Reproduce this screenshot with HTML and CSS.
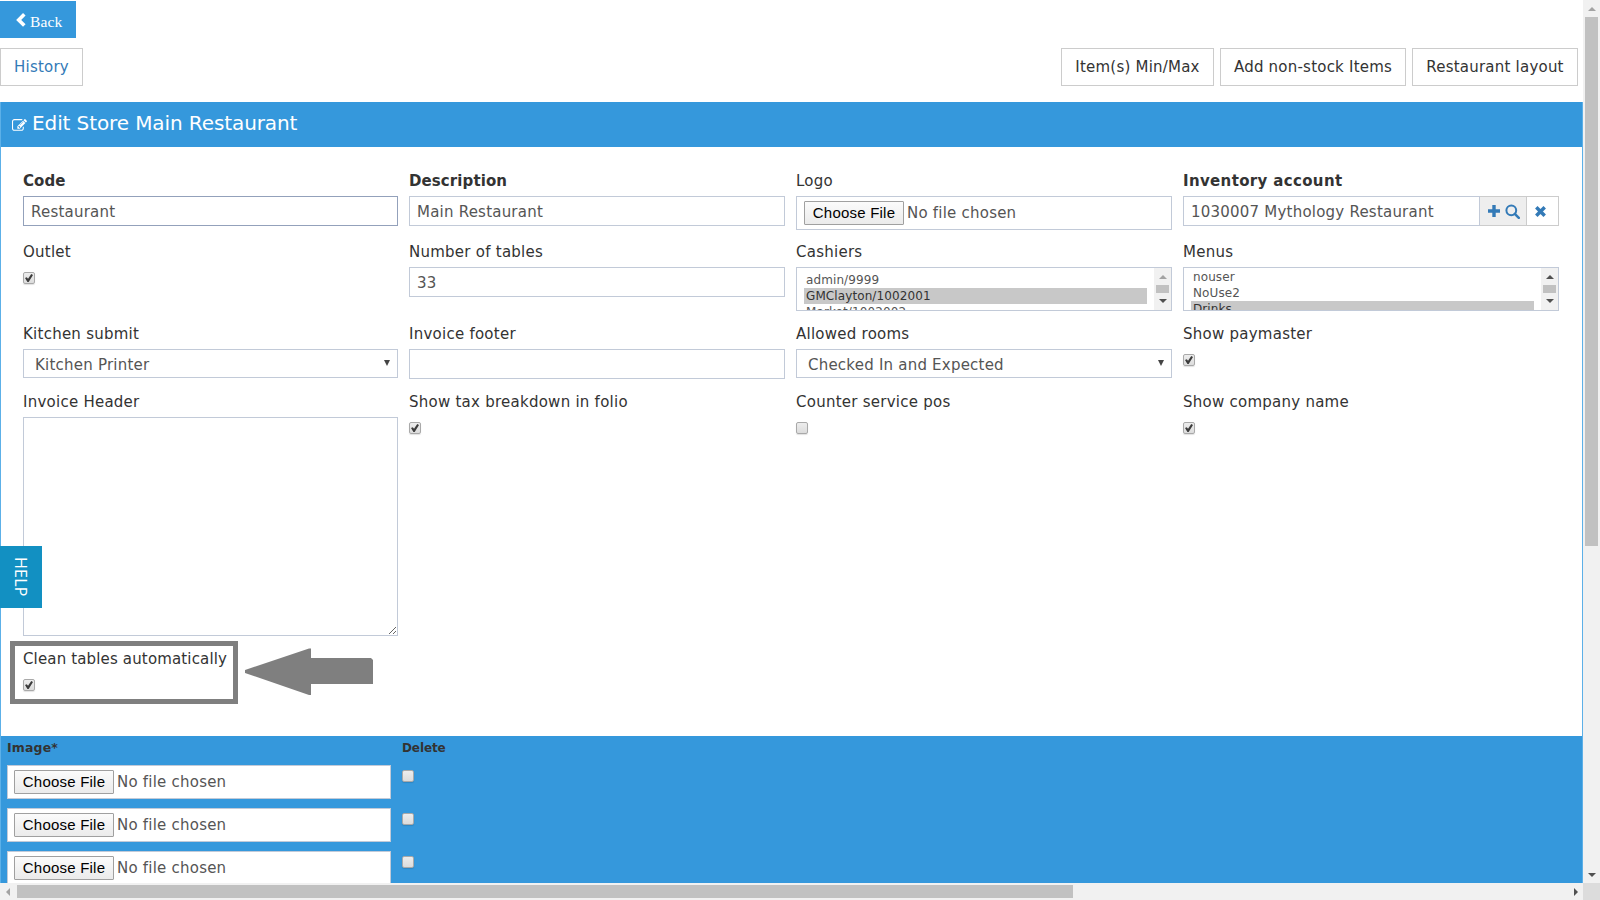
FILE: index.html
```html
<!DOCTYPE html>
<html lang="en">
<head>
  <meta charset="UTF-8">
  <title>Edit Store Main Restaurant</title>
  <link rel="stylesheet" href="styles.css">
</head>
<body>
<div class="window">
  <div class="page">
    <a class="back" href="#">
      <svg width="10" height="14" viewBox="0 0 10 14"><path d="M8.300 1.300 2.700 6.900l5.600 5.600" fill="none" stroke="#fff" stroke-width="3.600"/></svg>
      <span>Back</span>
    </a>
    <div class="toolbar">
      <a class="btn link" href="#">History</a>
      <div class="actions">
        <a class="btn b1" href="#">Item(s) Min/Max</a>
        <a class="btn b2" href="#">Add non-stock Items</a>
        <a class="btn b3" href="#">Restaurant layout</a>
      </div>
    </div>

    <div class="panel">
      <div class="panel-title">
        <svg width="15" height="15" viewBox="0 0 1792 1792"><path fill="#fff" d="M888 1184l116-116-152-152-116 116v56h96v96h56zm440-720q-16-16-33 1l-350 350q-17 17-1 33t33-1l350-350q17-17 1-33zm80 594v190q0 119-84.500 203.500t-203.500 84.500h-832q-119 0-203.500-84.500t-84.500-203.500v-832q0-119 84.500-203.500t203.500-84.500h832q63 0 117 25 15 7 18 23 3 17-9 29l-49 49q-14 14-32 8-23-6-45-6h-832q-66 0-113 47t-47 113v832q0 66 47 113t113 47h832q66 0 113-47t47-113v-126q0-13 9-22l64-64q15-15 35-7t20 29zm-96-738l288 288-672 672h-288v-288zm444 132l-92 92-288-288 92-92q28-28 68-28t68 28l152 152q28 28 28 68t-28 68z"/></svg>
        <h1>Edit Store Main Restaurant</h1>
      </div>

      <form class="form">
        <div class="field">
          <label class="required">Code</label>
          <input class="control focused" type="text" value="Restaurant">
        </div>
        <div class="field">
          <label class="required">Description</label>
          <input class="control" type="text" value="Main Restaurant">
        </div>
        <div class="field">
          <label>Logo</label>
          <div class="file"><span class="choose">Choose File</span><span>No file chosen</span></div>
        </div>
        <div class="field">
          <label class="required wide">Inventory account</label>
          <div class="group">
            <input class="control" type="text" value="1030007 Mythology Restaurant">
            <span class="addon find">
              <svg width="12" height="12" viewBox="0 0 12 12"><path d="M6 0v12M0 6h12" stroke="#337ab7" stroke-width="3.400"/></svg>
              <svg width="15" height="15" viewBox="0 0 15 15"><circle cx="6.300" cy="6.300" r="4.900" fill="none" stroke="#337ab7" stroke-width="2"/><path d="M9.800 9.800l4 4" stroke="#337ab7" stroke-width="2.500" stroke-linecap="round"/></svg>
            </span>
            <span class="addon clear">
              <svg width="11" height="11" viewBox="0 0 11 11"><path d="M1.300 1.300l8.400 8.400M9.700 1.300l-8.400 8.400" stroke="#337ab7" stroke-width="3.500"/></svg>
            </span>
          </div>
        </div>

        <div class="field">
          <label>Outlet</label>
          <input class="check" type="checkbox" checked>
        </div>
        <div class="field">
          <label>Number of tables</label>
          <input class="control" type="text" value="33">
        </div>
        <div class="field">
          <label>Cashiers</label>
          <div class="list">
            <ul class="options">
              <li>admin/9999</li>
              <li class="selected">GMClayton/1002001</li>
              <li>Market/1002002</li>
            </ul>
            <div class="list-bar"><i class="up off"></i><i class="grip"></i><i class="down"></i></div>
          </div>
        </div>
        <div class="field">
          <label>Menus</label>
          <div class="list">
            <ul class="options scrolled">
              <li>nouser</li>
              <li>NoUse2</li>
              <li class="selected">Drinks</li>
            </ul>
            <div class="list-bar"><i class="up"></i><i class="grip"></i><i class="down"></i></div>
          </div>
        </div>

        <div class="field">
          <label>Kitchen submit</label>
          <div class="select"><span>Kitchen Printer</span><i></i></div>
        </div>
        <div class="field">
          <label>Invoice footer</label>
          <input class="control" type="text">
        </div>
        <div class="field">
          <label>Allowed rooms</label>
          <div class="select"><span>Checked In and Expected</span><i></i></div>
        </div>
        <div class="field">
          <label>Show paymaster</label>
          <input class="check" type="checkbox" checked>
        </div>

        <div class="field">
          <label>Invoice Header</label>
          <textarea class="control"></textarea>
        </div>
        <div class="field">
          <label>Show tax breakdown in folio</label>
          <input class="check" type="checkbox" checked>
        </div>
        <div class="field">
          <label>Counter service pos</label>
          <input class="check" type="checkbox">
        </div>
        <div class="field">
          <label>Show company name</label>
          <input class="check" type="checkbox" checked>
        </div>

        <div class="field">
          <label class="tight">Clean tables automatically</label>
          <input class="check" type="checkbox" checked>
        </div>
      </form>

      <div class="images">
        <div class="head">Image*</div>
        <div class="head delete">Delete</div>
        <div class="file"><span class="choose">Choose File</span><span>No file chosen</span></div>
        <input class="check" type="checkbox">
        <div class="file"><span class="choose">Choose File</span><span>No file chosen</span></div>
        <input class="check" type="checkbox">
        <div class="file"><span class="choose">Choose File</span><span>No file chosen</span></div>
        <input class="check" type="checkbox">
      </div>
    </div>
  </div>

  <div class="vbar"><i class="up off"></i><i class="thumb"></i><i class="down"></i></div>
  <div class="hbar"><i class="left"></i><i class="thumb"></i><i class="right"></i></div>
  <div class="corner"></div>
</div>

<!-- things that float over the form -->
<a class="help" href="#">HELP</a>
<div class="highlight"></div>
<svg class="arrow" width="128" height="48" viewBox="0 0 128 48"><path fill="#7f7f7f" d="M0 22 64 0.500h2V10h60l2 2v24H66v11h-2L0 25z"/></svg>
</body>
</html>
```

FILE: styles.css
```css
* {
  box-sizing: border-box;
}
body {
  margin: 0;
  overflow: hidden;
  background: #fff;
  color: #333;
  font-family: "DejaVu Sans", Verdana, sans-serif;
  font-size: 15px;
  letter-spacing: 0.22px;
}
a {
  text-decoration: none;
}
.window {
  display: grid;
  grid-template-columns: 1583px 17px;
  grid-template-rows: 883px 17px;
  width: 1600px;
  height: 900px;
}
.page {
  overflow: hidden;
  padding-top: 1px;
}
.back {
  display: flex;
  align-items: center;
  gap: 4px;
  width: 76px;
  height: 37px;
  padding-left: 16px;
  background: #3598dc;
  color: #fff;
  font-family: "Liberation Serif", serif;
  font-size: 15.5px;
  letter-spacing: 0.1px;
}
.back span {
  padding-top: 5px;
}
.toolbar {
  display: flex;
  justify-content: space-between;
  padding: 10px 5px 0 0;
}
.actions {
  display: flex;
  gap: 6px;
}
.btn {
  height: 38px;
  border: 1px solid #ccc;
  color: #333;
  line-height: 36px;
  text-align: center;
  white-space: nowrap;
}
.link {
  width: 83px;
  color: #337ab7;
}
.b1 {
  width: 153px;
}
.b2 {
  width: 186px;
}
.b3 {
  width: 166px;
}

/* panel */
.panel {
  margin-top: 16px;
  border: 1px solid #5cb0e8;
  border-top: none;
}
.panel-title {
  display: flex;
  height: 45px;
  padding: 0 11px;
  background: #3598dc;
  color: #fff;
}
.panel-title svg {
  margin: 16px 5px 0 0;
}
.panel-title h1 {
  margin: 0;
  font-size: 20px;
  font-weight: normal;
  letter-spacing: -0.1px;
  line-height: 42px;
}
.form {
  display: grid;
  grid-template-columns: 375px 376px 376px 376px;
  grid-template-rows: 71px 82px 68px 257px 87px;
  column-gap: 11px;
  padding: 24px 0 0 22px;
}
.field label {
  display: block;
  height: 25px;
  line-height: 20px;
  letter-spacing: 0.25px;
}
.field .required {
  font-weight: bold;
  letter-spacing: 0.1px;
}
.field .wide {
  letter-spacing: 0.35px;
}
.field .tight {
  letter-spacing: 0.15px;
}
.control {
  display: block;
  width: 100%;
  height: 30px;
  margin: 0;
  padding: 2px 7px 0;
  border: 1px solid #c2cad8;
  outline: none;
  background: #fff;
  color: #555;
  font: inherit;
  letter-spacing: 0.22px;
}
.focused {
  border-color: #93a1bb;
}
textarea.control {
  height: 219px;
}
.file {
  display: flex;
  align-items: center;
  gap: 3px;
  height: 34px;
  padding-left: 7px;
  border: 1px solid #c2cad8;
  background: #fff;
  color: #555;
}
.choose {
  width: 100px;
  height: 24px;
  border: 1px solid #a0a0a0;
  border-radius: 1px;
  background: linear-gradient(#fbfbfb, #ebebeb);
  color: #000;
  font-family: "Liberation Sans", Arial, sans-serif;
  line-height: 22px;
  text-align: center;
}
.group {
  display: flex;
}
.group .control {
  width: 297px;
}
.addon {
  display: flex;
  align-items: center;
  height: 30px;
  border: 1px solid #ccc;
  border-left: none;
}
.find {
  gap: 5px;
  width: 47px;
  padding-left: 8px;
  background: #eee;
}
.clear {
  width: 32px;
  padding-left: 8px;
}
.select {
  display: flex;
  align-items: center;
  justify-content: space-between;
  height: 29px;
  padding: 2px 7px 0 11px;
  border: 1px solid #c2cad8;
  color: #555;
}
.select i {
  margin-bottom: 4px;
  border: 3px solid transparent;
  border-top: 6px solid #444;
  border-bottom: none;
}

/* checkboxes */
.check {
  appearance: none;
  display: block;
  width: 12px;
  height: 12px;
  margin: 5px 0 0;
  border: 1px solid #a9a9a9;
  border-radius: 2px;
  background: linear-gradient(#ededed, #dcdcdc);
  box-shadow: 0 1px 1px rgba(0, 0, 0, 0.12);
}
.check:checked::before {
  content: "";
  display: block;
  width: 8px;
  height: 8px;
  margin: 1px;
  background: #3c3c3c;
  clip-path: polygon(0 50%, 22% 40%, 38% 60%, 78% 0, 100% 14%, 46% 100%, 30% 100%);
}

/* multi selects */
.list {
  display: flex;
  height: 44px;
  border: 1px solid #c2cad8;
  overflow: hidden;
}
.options {
  flex: 1;
  margin: 0;
  padding: 4px 7px 0;
  list-style: none;
  color: #555;
  font-size: 12px;
  letter-spacing: 0.1px;
}
.scrolled {
  padding-top: 1px;
}
.options li {
  height: 16px;
  padding-left: 2px;
  line-height: 16px;
}
.options .selected {
  background: #c8c8c8;
  color: #333;
}
.list-bar {
  display: flex;
  flex-direction: column;
  align-items: center;
  width: 17px;
  padding-top: 7px;
  background: #f1f1f1;
}
.list-bar .grip {
  width: 13px;
  height: 8px;
  margin: 6px 0;
  background: #c1c1c1;
}
.up {
  border: 4px solid transparent;
  border-top: none;
  border-bottom-color: #505050;
}
.down {
  border: 4px solid transparent;
  border-bottom: none;
  border-top-color: #505050;
}
.up.off {
  border-bottom-color: #a3a3a3;
}

/* images table */
.images {
  display: grid;
  grid-template-columns: 384px 12px;
  grid-template-rows: 29px 43px 43px 43px;
  column-gap: 11px;
  align-items: start;
  padding-left: 6px;
  background: #3598dc;
}
.images .head {
  font-size: 12.5px;
  font-weight: bold;
  line-height: 24px;
  letter-spacing: 0.15px;
}
.images .delete {
  font-size: 12px;
  letter-spacing: -0.1px;
}
.images .file {
  padding-left: 6px;
}

/* window scrollbars */
.vbar,
.hbar {
  display: flex;
  align-items: center;
  background: #f1f1f1;
}
.vbar {
  flex-direction: column;
  padding: 7px 0 6px;
}
.vbar .thumb {
  width: 13px;
  height: 529px;
  margin: 6px 0 auto;
  background: #c1c1c1;
}
.hbar {
  padding: 0 5px 0 6px;
}
.hbar .thumb {
  width: 1056px;
  height: 13px;
  margin: 0 auto 0 7px;
  background: #c1c1c1;
}
.left {
  border: 4px solid transparent;
  border-left: none;
  border-right-color: #a3a3a3;
}
.right {
  border: 4px solid transparent;
  border-right: none;
  border-left-color: #505050;
}
.corner {
  background: #dcdcdc;
}

.help {
  position: absolute;
  left: 0;
  top: 546px;
  width: 42px;
  height: 62px;
  background: #1290c2;
  color: #fff;
  font-family: "Open Sans", sans-serif;
  font-size: 16px;
  line-height: 43px;
  text-align: center;
  writing-mode: vertical-rl;
}
.highlight {
  position: absolute;
  left: 10px;
  top: 641px;
  width: 228px;
  height: 63px;
  border: 5px solid #7f7f7f;
}
.arrow {
  position: absolute;
  left: 245px;
  top: 648px;
}
```
